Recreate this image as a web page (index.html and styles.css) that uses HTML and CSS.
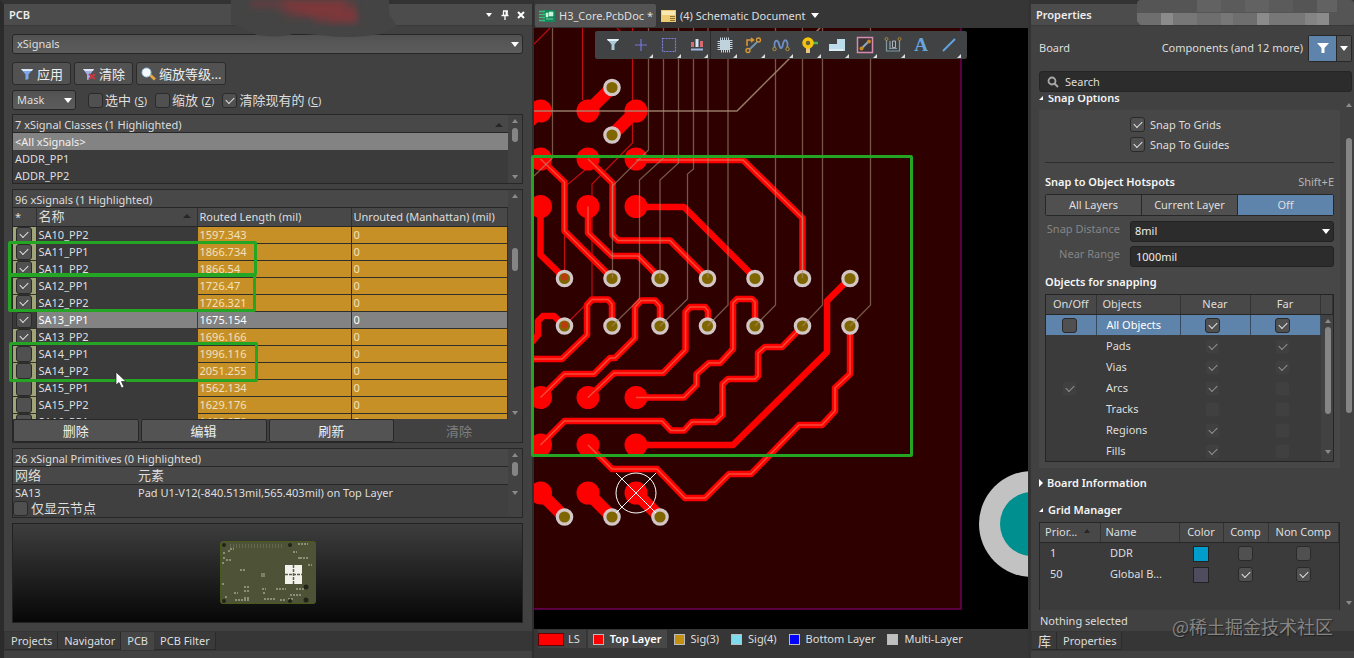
FILE: index.html
```html
<!DOCTYPE html>
<html lang="zh-CN">
<head>
<meta charset="utf-8">
<title>H3_Core.PcbDoc</title>
<link rel="stylesheet" href="styles.css">
</head>
<body>
<div class="app">
  <aside class="panel left">
    <header class="panel-head">
      <h1>PCB</h1>
      <svg class="smudge" width="170" height="37" viewBox="0 0 170 37" aria-hidden="true">
        <path d="M0 0H158V14L166 26L150 34Q120 39 98 36L64 33Q50 39 26 35L10 27L0 24Z" fill="#454444"/>
        <g filter="url(#soft)"><path d="M20 0H124V10H105V24H84V18H58L44 8H20Z" fill="#5e3e3f"/><path d="M48 0H114V9H126V23H100V18H84L60 10Z" fill="#7c373b"/></g>
        <filter id="soft"><feGaussianBlur stdDeviation="3"/></filter>
      </svg>
      <div class="head-icons">
        <button aria-label="Menu"><svg width="10" height="10"><path d="M2 3H8L5 7Z" fill="#fff"/></svg></button>
        <button aria-label="Pin"><svg width="10" height="10"><path d="M3 1H8M3.500 1V5M7 1V5M1.500 5.500H8.500M5 6V10" stroke="#fff" stroke-width="1.300" fill="none"/><path d="M5.500 1H7.500V5H5.500Z" fill="#fff"/></svg></button>
        <button aria-label="Close"><svg width="10" height="10"><path d="M2 2L8 8M8 2L2 8" stroke="#fff" stroke-width="2"/></svg></button>
      </div>
    </header>

    <div class="left-body">
      <div class="select wide"><select aria-label="Mode"><option>xSignals</option></select></div>
      <div class="actions">
        <button class="btn"><svg width="14" height="14"><path d="M1 2H13L8.500 7.500V12L5.500 13V7.500Z" fill="#7ea6ea"/><path d="M1 2H13L12 4H3Z" fill="#dbe6fa"/></svg>应用</button>
        <button class="btn"><svg width="14" height="14"><path d="M1 2H12L8 7.500V12L5 13V7.500Z" fill="#9cb2e6"/><path d="M1 2H12L11 4H3Z" fill="#e2e8fa"/><path d="M7 7L13 12M13 7L7 12" stroke="#cf3640" stroke-width="2"/></svg>清除</button>
        <button class="btn"><svg width="15" height="14"><path d="M8 7L14 12.500" stroke="#e2a743" stroke-width="3"/><circle cx="5.500" cy="5.500" r="4.500" fill="#f4f9ff" stroke="#9fc6e6"/></svg>缩放等级...</button>
      </div>
      <div class="options">
        <div class="select mask"><select aria-label="Mask mode"><option>Mask</option></select></div>
        <label><input type="checkbox"><span>选中 <small>(<u>S</u>)</small></span></label>
        <label><input type="checkbox"><span>缩放 <small>(<u>Z</u>)</small></span></label>
        <label><input type="checkbox" checked><span>清除现有的 <small>(<u>C</u>)</small></span></label>
      </div>

      <section class="box classes">
        <div class="grow">
          <h2>7 xSignal Classes (1 Highlighted)<i class="sort"></i></h2>
          <ul><li class="sel">&lt;All xSignals&gt;</li><li>ADDR_PP1</li><li>ADDR_PP2</li></ul>
        </div>
        <div class="scroll"><i class="up"></i><i class="thumb"></i><i class="down"></i></div>
      </section>

      <section class="box signals">
        <div class="signals-main">
          <div class="grow">
            <h2>96 xSignals (1 Highlighted)</h2>
            <div class="clip">
            <table class="sig-table">
              <colgroup><col class="c1"><col class="c2"><col class="c3"><col></colgroup>
              <thead><tr><th>*</th><th class="cn">名称<i class="sort"></i></th><th>Routed Length (mil)</th><th>Unrouted (Manhattan) (mil)</th></tr></thead>
              <tbody>
                <tr><td><input type="checkbox" aria-label="SA10_PP2" checked></td><td>SA10_PP2</td><td>1597.343</td><td>0</td></tr>
                <tr><td><input type="checkbox" aria-label="SA11_PP1" checked></td><td>SA11_PP1</td><td>1866.734</td><td>0</td></tr>
                <tr><td><input type="checkbox" aria-label="SA11_PP2" checked></td><td>SA11_PP2</td><td>1866.54</td><td>0</td></tr>
                <tr><td><input type="checkbox" aria-label="SA12_PP1" checked></td><td>SA12_PP1</td><td>1726.47</td><td>0</td></tr>
                <tr><td><input type="checkbox" aria-label="SA12_PP2" checked></td><td>SA12_PP2</td><td>1726.321</td><td>0</td></tr>
                <tr class="sel"><td><input type="checkbox" aria-label="SA13_PP1" checked></td><td>SA13_PP1</td><td>1675.154</td><td>0</td></tr>
                <tr><td><input type="checkbox" aria-label="SA13_PP2" checked></td><td>SA13_PP2</td><td>1696.166</td><td>0</td></tr>
                <tr><td><input type="checkbox" aria-label="SA14_PP1"></td><td>SA14_PP1</td><td>1996.116</td><td>0</td></tr>
                <tr><td><input type="checkbox" aria-label="SA14_PP2"></td><td>SA14_PP2</td><td>2051.255</td><td>0</td></tr>
                <tr><td><input type="checkbox" aria-label="SA15_PP1"></td><td>SA15_PP1</td><td>1562.134</td><td>0</td></tr>
                <tr><td><input type="checkbox" aria-label="SA15_PP2"></td><td>SA15_PP2</td><td>1629.176</td><td>0</td></tr>
                <tr><td><input type="checkbox" aria-label="SA16_PP1"></td><td>SA16_PP1</td><td>1468.878</td><td>0</td></tr>
              </tbody>
            </table>
            </div>
          </div>
          <div class="scroll mid"><i class="up"></i><i class="thumb"></i><i class="down"></i></div>
        </div>
        <div class="row-buttons">
          <button>删除</button><button>编辑</button><button>刷新</button><button disabled>清除</button>
        </div>
      </section>

      <section class="box prims">
        <div class="grow">
          <h2>26 xSignal Primitives (0 Highlighted)</h2>
          <table class="prim-table">
            <colgroup><col class="p1"><col></colgroup>
            <thead><tr><th>网络</th><th>元素</th></tr></thead>
            <tbody><tr><td>SA13</td><td>Pad U1-V12(-840.513mil,565.403mil) on Top Layer</td></tr></tbody>
          </table>
          <label class="nodes"><input type="checkbox"><span>仅显示节点</span></label>
        </div>
        <div class="scroll short"><i class="up"></i><i class="thumb"></i><i class="down"></i></div>
      </section>

      <div class="preview">
        <svg width="96" height="64" viewBox="0 0 96 64" role="img" aria-label="Board preview">
          <rect x=".5" y=".5" width="95" height="62" rx="2" fill="#4e5338" stroke="#4a5a1c"/>
          <path d="M10 4H64M10 6H64" stroke="#7c8066" stroke-dasharray="1 2"/>
          <path d="M78 3H84M78 17H82M73 11H77M80 17H88M10 8H14M3 12H6M8 10H10M6 19H12M20 29H25M24 46H29M14 52H18M24 50H29M15 59H30M24 57H29M42 48H46M43 52H46M44 58H56M56 48H66M68 58H74M76 48H84M70 54H82M2 43H5M3 17H5M5 56H8M60 59H66M88 24H92M84 3H88M2 22H5" stroke="#8b8f76" stroke-width="2" stroke-dasharray="2 1"/>
          <rect x="41" y="32" width="4" height="4" fill="#7b8069"/>
          <g fill="#1f2416"><circle cx="4" cy="4" r="2"/><circle cx="70" cy="4" r="2"/><circle cx="4" cy="60" r="2"/><circle cx="70" cy="60" r="2"/><circle cx="86" cy="46" r="2.500"/><circle cx="86" cy="59" r="2.500"/></g>
          <rect x="65" y="24" width="17" height="19" fill="#f2f2ea"/><path d="M65 33.500H82M73.500 24V43" stroke="#5b5f49" stroke-width="1.500" stroke-dasharray="3 1"/>
        </svg>
      </div>
    </div>

    <nav class="tabs"><a href="#">Projects</a><a href="#">Navigator</a><a href="#" class="on">PCB</a><a href="#">PCB Filter</a></nav>
  </aside>

  <main class="center">
    <nav class="doc-tabs">
      <a href="#" class="on"><svg width="16" height="12"><rect x="4" width="12" height="12" rx="1" fill="#12885a"/><path d="M0 1.500H6M0 4.500H6M0 7.500H6M0 10.500H6" stroke="#37c07e" stroke-width="1.300"/><path d="M7 3H9V7H7ZM10 2H14V6H10ZM7 9H14" fill="#c8f3dc" stroke="#c8f3dc" stroke-width=".6"/></svg>H3_Core.PcbDoc *</a>
      <a href="#"><svg width="15" height="12"><path d="M0 0H15V12H0Z" fill="#eccb72"/><path d="M1 1H14V5H1Z" fill="#f8e8b2"/><path d="M9 6.500H14M9 8.500H14M9 10.500H14" stroke="#94732c"/></svg>(4) Schematic Document<i class="caret"></i></a>
    </nav>
    <div class="canvas">
      <svg class="pcb" viewBox="534 28 494 601" preserveAspectRatio="xMinYMin slice" role="img" aria-label="PCB layout">
        <rect x="534" y="28" width="494" height="601" fill="#000"/>
        <path d="M534 28H961V609H534Z" fill="#2e0000"/>
        <path d="M961 28V609H534" fill="none" stroke="#6c0058" stroke-width="1.500"/>
        <circle cx="1032" cy="524" r="53" fill="#c2c2c2"/><circle cx="1032" cy="524" r="32" fill="#008f8f"/>
        <g fill="none" stroke="#c00c10" stroke-width="1.200">
          <path d="M534 44L550 28M582.500 28V100M632.500 28V143L592 184V298L564.500 326M585 170L564.500 187V278M617 28L622 33"/>
        </g>
        <g fill="#f00">
          <circle cx="540.500" cy="111" r="11.500"/><circle cx="588" cy="111" r="11.500"/><circle cx="636" cy="111" r="11.500"/>
          <circle cx="540.500" cy="159" r="11.500"/><circle cx="588" cy="159" r="11.500"/><circle cx="636" cy="159" r="11.500"/>
          <circle cx="540.500" cy="206.500" r="11.500"/><circle cx="588" cy="206.500" r="11.500"/><circle cx="636" cy="206.500" r="11.500"/>
          <circle cx="540.500" cy="397.500" r="11.500"/><circle cx="588" cy="397.500" r="11.500"/><circle cx="636" cy="397.500" r="11.500"/>
          <circle cx="540.500" cy="445" r="11.500"/><circle cx="588" cy="445" r="11.500"/><circle cx="636" cy="445" r="11.500"/>
          <circle cx="540.500" cy="493" r="11.500"/><circle cx="588" cy="493" r="11.500"/><circle cx="636" cy="493" r="11.500"/>
        </g>
        <path d="M588 111L612 87.500M636 111L612 135M540.500 111L530 121M540.500 493L564.500 517M588 493L612 517M636 493L660 517" stroke="#f00" stroke-width="12.500"/>
        <g fill="none" stroke="#f00" stroke-width="6.500" stroke-linejoin="round">
          <path d="M540.500 206.500V255L564.500 278M636 207H684L755 278M636 445H733L827 352V301L850 278M532 342L538 335V321L543 316H554L564.500 326"/>
          <path d="M540.500 159L564.500 182V231L612 278"/><path d="M588 206.500V233L612 256H638L660 278"/><path d="M588 159L612.500 183V235L618 240.500H670L707.500 278"/><path d="M636 160H743L802.500 218V278"/><path d="M534 359H562L587 335V305L592 299.500H608L612 304V326"/><path d="M540.500 397.500L564.500 374H594L610 358H615L635 338V307L641 300.500H655L660 306V326"/><path d="M588 397.500L614 373H663L685.500 350V312L690 307H705L708 311V326"/><path d="M636 397.500H684L696.500 385V374L709 363H720L733 349V303L737 299H752L755 302V326"/><path d="M540.500 445L564.500 421H662L671 430.500H684L692 422H715L722.500 415V384L728 379H755L758 376V353L765 347H782L802.500 326"/><path d="M588 445L612 469H657L685 498H705L729 474H751L799 425H822L835 411V388L850 374V326"/>
        </g>
        <g fill="none" stroke="#f54a34" stroke-width="1.500">
          <path d="M540.500 159L564.500 182V231L612 278"/><path d="M588 206.500V233L612 256H638L660 278"/><path d="M588 159L612.500 183V235L618 240.500H670L707.500 278"/><path d="M636 160H743L802.500 218V278"/><path d="M534 359H562L587 335V305L592 299.500H608L612 304V326"/><path d="M540.500 397.500L564.500 374H594L610 358H615L635 338V307L641 300.500H655L660 306V326"/><path d="M588 397.500L614 373H663L685.500 350V312L690 307H705L708 311V326"/><path d="M636 397.500H684L696.500 385V374L709 363H720L733 349V303L737 299H752L755 302V326"/><path d="M540.500 445L564.500 421H662L671 430.500H684L692 422H715L722.500 415V384L728 379H755L758 376V353L765 347H782L802.500 326"/><path d="M588 445L612 469H657L685 498H705L729 474H751L799 425H822L835 411V388L850 374V326"/>
        </g>
        <g fill="#806600" stroke="#d2c6c6" stroke-width="3.200">
          <circle cx="612" cy="87.500" r="7.200"/><circle cx="612" cy="135" r="7.200"/>
          <circle cx="564.500" cy="278.500" r="7.200"/><circle cx="612" cy="278.500" r="7.200"/><circle cx="660" cy="278.500" r="7.200"/><circle cx="707.500" cy="278.500" r="7.200"/><circle cx="755" cy="278.500" r="7.200"/><circle cx="802.500" cy="278.500" r="7.200"/><circle cx="850" cy="278.500" r="7.200"/>
          <circle cx="564.500" cy="326" r="7.200"/><circle cx="612" cy="326" r="7.200"/><circle cx="660" cy="326" r="7.200"/><circle cx="707.500" cy="326" r="7.200"/><circle cx="755" cy="326" r="7.200"/><circle cx="802.500" cy="326" r="7.200"/><circle cx="850" cy="326" r="7.200"/>
          <circle cx="564.500" cy="517" r="7.200"/><circle cx="612" cy="517" r="7.200"/><circle cx="660" cy="517" r="7.200"/>
        </g>
        <g fill="#b83c10"><circle cx="564.500" cy="277" r="3.500"/><circle cx="564.500" cy="325" r="3.500"/></g>
        <g fill="none" stroke="#a88e78" stroke-opacity=".6" stroke-width="1.300">
          <path d="M552.500 28V158L534 176M648.500 28V150L612.500 186V278M663.500 28V158L639.500 180V299L612 326M678.500 28V163L660 180V278M693.500 28V169L687.500 174V299L660 326M708 28V278M728 28V305L707.500 326M775.500 28V305L755 326M802.500 28V278M822.500 28V305L802.500 326M870.500 28V305L850 326"/>
          <path d="M534 111H737L820 28" stroke-opacity=".85" stroke-width="1.500"/>
        </g>
        <g fill="none" stroke="#fff" stroke-width="1"><circle cx="636" cy="493" r="20"/><path d="M616 473L656 513M656 473L616 513"/></g>
      </svg>
      <div class="toolbar">
        <button aria-label="Filter"><svg width="20" height="20"><path d="M4 4H16L11.500 9.500V15H8.500V9.500Z" fill="#a9c9d8"/><path d="M4 4H16L15 6H5Z" fill="#e7f2f6"/></svg></button>
        <button class="more" aria-label="Move"><svg width="20" height="20"><path d="M10 4V16M4 10H16" stroke="#7377d8" stroke-width="1.200"/></svg></button>
        <button class="more" aria-label="Select"><svg width="20" height="20"><path d="M3.500 3.500H16.500V16.500H3.500Z" fill="none" stroke="#7d80e0" stroke-width="1.200" stroke-dasharray="2 1"/></svg></button>
        <button class="more sep" aria-label="Align"><svg width="20" height="20"><path d="M4 7H7V12H4ZM13 6H16V12H13Z" fill="#d96b70"/><path d="M8.500 4H11.500V12H8.500Z" fill="#d3e4f4"/><path d="M4 14.500H16" stroke="#9eb6e0" stroke-width="2"/></svg></button>
        <button class="more" aria-label="Component"><svg width="20" height="20"><path d="M5 5H15V15H5Z" fill="none" stroke="#c3d2dc" stroke-width="5" stroke-dasharray="1 1"/><path d="M5 5H15V15H5Z" fill="#c0d2dc"/></svg></button>
        <button class="more" aria-label="Route"><svg width="20" height="20"><path d="M4 11V5H10M8 3L10.500 5L8 7" fill="none" stroke="#d99a35" stroke-width="1.500"/><path d="M7 14L14 7" stroke="#7095b0" stroke-width="2"/><g fill="#404244" stroke="#d99a35" stroke-width="1.300"><circle cx="15.500" cy="5" r="2"/><circle cx="5" cy="15.500" r="2"/></g></svg></button>
        <button class="more" aria-label="Tune"><svg width="20" height="20"><path d="M4 14C2 4 7 4 8 9S11 15 12 9S18 4 16 14" fill="none" stroke="#6f8fc6" stroke-width="1.800"/><g fill="#404244" stroke="#b99535"><circle cx="3.500" cy="14" r="1.700"/><circle cx="16.500" cy="14" r="1.700"/></g></svg></button>
        <button class="more" aria-label="Via"><svg width="20" height="20"><path d="M9 10V18" stroke="#ebc77c" stroke-width="4"/><path d="M13 8H19" stroke="#4bb645" stroke-width="2.500"/><circle cx="9" cy="8" r="4" fill="#676142" stroke="#f5c30c" stroke-width="3.500"/></svg></button>
        <button class="more" aria-label="Polygon"><svg width="20" height="20"><path d="M10 4H18V16H2V9H10Z" fill="#bddceb"/><path d="M16 6V16H2V14H16Z" fill="#dcecf2"/></svg></button>
        <button class="more" aria-label="Room"><svg width="20" height="20"><path d="M2.500 2.500H17.500V17.500H2.500Z" fill="#3b3436" stroke="#d68bb4" stroke-width="1.500"/><path d="M7 13L13 7" stroke="#8ca8c4" stroke-width="2"/><g fill="#c68b1f"><circle cx="14" cy="6.500" r="2"/><circle cx="6.500" cy="13.500" r="2"/></g></svg></button>
        <button class="more" aria-label="Dimension"><svg width="20" height="20"><path d="M3.500 5V16H16.500V5M6 13.500H14" fill="none" stroke="#8099a5" stroke-width="1.200"/><g fill="none" stroke="#aa8738"><circle cx="3.500" cy="4" r="1.500"/><circle cx="16.500" cy="4" r="1.500"/></g><path d="M7 6V13M9.500 6H12.500V12.500H9.500Z" fill="none" stroke="#a9b5bb"/></svg></button>
        <button aria-label="Text" class="letter">A</button>
        <button class="more" aria-label="Line"><svg width="20" height="20"><path d="M4 16L16 4" stroke="#63a2df" stroke-width="2"/></svg></button>
      </div>
    </div>
    <div class="layers">
      <button class="ls"><i class="red"></i>LS</button>
      <button class="on"><i class="red"></i>Top Layer</button>
      <button><i class="gold"></i>Sig(3)</button>
      <button><i class="cyan"></i>Sig(4)</button>
      <button><i class="blue"></i>Bottom Layer</button>
      <button><i class="gray"></i>Multi-Layer</button>
    </div>
  </main>

  <aside class="panel right">
    <header class="panel-head">
      <h1>Properties</h1>
      <svg class="mosaic" width="217" height="25" viewBox="0 0 217 25" preserveAspectRatio="none" aria-hidden="true">
        <rect width="217" height="25" rx="4" fill="#555"/><path d="M60 0H84V12H60ZM108 0H132V12H108ZM180 0H200V12H180Z" fill="#626262"/><path d="M84 0H108V12H84ZM132 0H156V12H132Z" fill="#5b5b5b"/><path d="M0 13H24V25H4L0 21ZM60 13H84V25H60ZM96 13H120V25H96Z" fill="#6e6e6e"/><path d="M24 13H36V25H24ZM120 13H132V25H120ZM180 13H192V25H180Z" fill="#8b8b8b"/><path d="M36 13H60V25H36ZM84 13H96V25H84ZM132 13H168V25H132Z" fill="#777"/><path d="M168 13H180V25H168Z" fill="#848484"/>
      </svg>
    </header>
    <div class="board-row">
      <span>Board</span><span class="push">Components (and 12 more)</span>
      <div class="split"><button class="blue" aria-label="Filter"><svg width="12" height="12"><path d="M0 1H12L7.500 6V11H4.500V6Z" fill="#fff"/></svg></button><button aria-label="Filter menu"><i class="caret"></i></button></div>
    </div>
    <label class="search"><svg width="12" height="12"><circle cx="5" cy="5" r="3.500" fill="none" stroke="#a8a8a8" stroke-width="1.800"/><path d="M7.500 7.500L11 11" stroke="#a8a8a8" stroke-width="2"/></svg><input type="text" placeholder="Search" aria-label="Search"></label>

    <div class="props">
      <div class="props-main">
        <div class="cut"><h3 class="open">Snap Options</h3></div>
        <section class="group">
          <div class="snaps">
            <label><input type="checkbox" checked><span>Snap To Grids</span></label>
            <label><input type="checkbox" checked><span>Snap To Guides</span></label>
          </div>
          <div class="hot"><h4>Snap to Object Hotspots</h4><span>Shift+E</span></div>
          <div class="segments"><button>All Layers</button><button>Current Layer</button><button class="blue">Off</button></div>
          <div class="field"><label for="dist">Snap Distance</label><div class="select dark"><select id="dist"><option>8mil</option></select></div></div>
          <div class="field"><label for="near">Near Range</label><input type="text" id="near" value="1000mil"></div>
          <h4 class="obj-title">Objects for snapping</h4>
          <div class="obj-box">
            <table class="obj">
              <colgroup><col class="o1"><col class="o2"><col class="o3"><col class="o3"><col></colgroup>
              <thead><tr><th>On/Off</th><th>Objects</th><th>Near</th><th>Far</th><th></th></tr></thead>
              <tbody>
                <tr class="sel"><td><input type="checkbox" aria-label="All on"></td><td>All Objects</td><td><input type="checkbox" checked aria-label="All near"></td><td><input type="checkbox" checked aria-label="All far"></td><td class="bar" rowspan="7"><div class="scroll obj-scroll"><i class="up"></i><i class="thumb"></i><i class="down"></i></div></td></tr>
                <tr><td></td><td>Pads</td><td><input type="checkbox" checked disabled aria-label="Pads near"></td><td><input type="checkbox" checked disabled aria-label="Pads far"></td></tr>
                <tr><td></td><td>Vias</td><td><input type="checkbox" checked disabled aria-label="Vias near"></td><td><input type="checkbox" checked disabled aria-label="Vias far"></td></tr>
                <tr><td><input type="checkbox" checked disabled aria-label="Arcs on"></td><td>Arcs</td><td><input type="checkbox" checked disabled aria-label="Arcs near"></td><td><input type="checkbox" disabled aria-label="Arcs far"></td></tr>
                <tr><td></td><td>Tracks</td><td><input type="checkbox" disabled aria-label="Tracks near"></td><td><input type="checkbox" disabled aria-label="Tracks far"></td></tr>
                <tr><td></td><td>Regions</td><td><input type="checkbox" checked disabled aria-label="Regions near"></td><td><input type="checkbox" disabled aria-label="Regions far"></td></tr>
                <tr><td></td><td>Fills</td><td><input type="checkbox" checked disabled aria-label="Fills near"></td><td><input type="checkbox" disabled aria-label="Fills far"></td></tr>
              </tbody>
            </table>
          </div>
        </section>
        <h3 class="closed">Board Information</h3>
        <h3 class="open">Grid Manager</h3>
        <div class="grid-box">
          <table class="grids">
            <colgroup><col class="g1"><col class="g2"><col class="g3"><col class="g4"><col></colgroup>
            <thead><tr><th>Prior...<i class="sort"></i></th><th>Name</th><th>Color</th><th>Comp</th><th>Non Comp</th></tr></thead>
            <tbody>
              <tr><td>1</td><td>DDR</td><td><i class="swatch sky"></i></td><td><input type="checkbox" aria-label="DDR comp"></td><td><input type="checkbox" aria-label="DDR non comp"></td></tr>
              <tr><td>50</td><td>Global B...</td><td><i class="swatch slate"></i></td><td><input type="checkbox" checked aria-label="Global comp"></td><td><input type="checkbox" checked aria-label="Global non comp"></td></tr>
            </tbody>
          </table>
        </div>
      </div>
      <div class="scroll page-scroll"><i class="up"></i><i class="thumb"></i><i class="down"></i></div>
    </div>
    <p class="status">Nothing selected</p>
    <nav class="tabs"><a href="#" class="cn">库</a><a href="#">Properties</a></nav>
  </aside>

  <div class="mark m1"></div><div class="mark m2"></div><div class="mark m3"></div><div class="mark m4"></div>
  <svg class="cursor" width="12" height="19" viewBox="0 0 12 19" aria-hidden="true"><path d="M1 1V14L4 11.500L6.500 17L9 16L6.500 10.500H11Z" fill="#fff" stroke="#222" stroke-width=".7"/></svg>
  <div class="watermark">@稀土掘金技术社区</div>
</div>
</body>
</html>
```
FILE: styles.css
```css
* { box-sizing: border-box; }
body { margin: 0; background: #363636; color: #dedede; font: 11px/16px "Noto Sans", "Noto Sans CJK SC", sans-serif; }
h1, h2, h3, h4, p, ul { margin: 0; padding: 0; font-size: 11px; font-weight: 400; list-style: none; }
button, input, select { font: inherit; color: inherit; margin: 0; padding: 0; border: 0; background: none; border-radius: 0; }
a { color: inherit; text-decoration: none; }
table { border-collapse: collapse; border-spacing: 0; table-layout: fixed; width: 100%; }
th, td { padding: 0; font-weight: 400; text-align: left; white-space: nowrap; overflow: hidden; }
small { font-size: 11px; }
svg { flex: none; }

.app { position: relative; display: grid; grid-template-columns: 534px minmax(0, 1fr) 326px; min-height: 100vh; overflow: hidden; }
.panel { display: flex; flex-direction: column; background: #414141; border-top: 4px solid #333; min-width: 0; }
.left { border-left: 4px solid #2b2b2b; border-right: 2px solid #2e2e2e; }
.right { border-left: 3px solid #333; }
.panel-head { position: relative; z-index: 1; display: flex; align-items: center; height: 22px; padding: 0 6px 0 5px; background: #4c4c4c; border-bottom: 1px solid #393939; }
.panel-head h1 { flex: 1; font-size: 11px; font-weight: 600; color: #eee; }
.head-icons { display: flex; gap: 6px; }
.head-icons button { display: flex; }
.smudge { position: absolute; left: 227px; top: -4px; }
.mosaic { position: absolute; left: 106px; right: 0; top: -4px; }

/* shared controls */
input[type="checkbox"] { appearance: none; flex: none; display: inline-block; position: relative; width: 15px; height: 15px; background: #505050; border: 1px solid #2a2a2a; border-radius: 3px; vertical-align: middle; }
input[type="checkbox"]:checked::before { content: ""; position: absolute; left: 3px; top: 3px; width: 7px; height: 4px; border-left: 1px solid #e6e6e6; border-bottom: 1px solid #e6e6e6; transform: rotate(-45deg); }
input[type="checkbox"]:disabled { background: #404040; border-color: #3c3c3c; }
input[type="checkbox"]:disabled::before { opacity: .5; }
.select { position: relative; display: flex; border: 1px solid #272727; border-radius: 3px; background: linear-gradient(#525252, #5c5c5c); }
.select select { appearance: none; width: 100%; height: 18px; padding: 0 4px; outline: 0; }
.select::after, .caret { content: ""; border: 4px solid transparent; border-top: 5px solid #fff; border-bottom: 0; }
.select::after { position: absolute; right: 3px; top: 7px; pointer-events: none; }
.sort { display: inline-block; border: 4px solid transparent; border-bottom: 4px solid #262626; border-top: 0; }
.btn { display: flex; align-items: center; gap: 3px; height: 23px; padding: 0 7px; background: #525252; border: 1px solid #2b2b2b; border-radius: 3px; font-size: 13px; color: #eee; }
.btn:last-child { padding: 0 4px; }
.blue { background: #5f84ab; }
.scroll { display: flex; flex-direction: column; align-items: center; width: 15px; padding: 4px 0; }
.scroll i { width: 6px; }
.up { border: 3px solid transparent; border-bottom: 4px solid #8b8b8b; border-top: 0; }
.down { border: 3px solid transparent; border-top: 4px solid #8b8b8b; border-bottom: 0; margin-top: auto; }
.thumb { height: 14px; margin-top: 5px; background: #858585; border-radius: 3px; }
.grow { flex: 1; min-width: 0; }
.cn { font-size: 13px; }

/* PCB panel */
.left-body { flex: 1; display: flex; flex-direction: column; padding: 8px 9px 8px 8px; }
.wide select { font-size: 11px; }
.actions { display: flex; gap: 3px; margin-top: 8px; }
.options { display: flex; align-items: center; gap: 8px; margin-top: 4px; height: 22px; font-size: 13px; }
.options label, .nodes { display: flex; align-items: center; gap: 2px; }
.mask { width: 64px; font-size: 11px; margin-right: 4px; }
.box { display: flex; border: 1px solid #272727; }
.box h2 { display: flex; align-items: center; justify-content: space-between; height: 18px; padding: 2px 5px 0 2px; background: #484848; border-bottom: 1px solid #272727; }
.classes { height: 70px; margin-top: 3px; background: #3b3b3b; }
.classes li { height: 17px; padding-left: 2px; line-height: 17px; }
.classes .sel { background: #838383; color: #f0f0f0; }
.box .scroll { background: #424242; width: 14px; }
.signals { flex-direction: column; margin-top: 5px; }
.signals-main { display: flex; height: 229px; }
.clip { height: 211px; overflow: hidden; }
.c1 { width: 23px; } .c2 { width: 161px; } .c3 { width: 154px; }
.sig-table th { height: 18px; background: #484848; border-bottom: 1px solid #272727; line-height: 17px; padding-left: 2px; border-right: 1px solid #303030; }
.sig-table .cn .sort { float: right; margin: 6px 6px 0; }
.sig-table td { height: 17px; line-height: 16px; padding-left: 2px; background: #c79027; color: #efe2bd; border-bottom: 1px solid #30302b; border-right: 1px solid #30302b; }
.sig-table td:nth-child(1) { padding: 0; background: #a0a477; text-align: center; }
.sig-table td:nth-child(1) input { display: block; margin: 0 auto; width: 16px; height: 16px; }
.sig-table td:nth-child(2) { background: #3a3a3a; color: #dedede; border-color: #3a3a3a; }
.sig-table .sel td { background: #838383; color: #fff; }
.sig-table .sel td:nth-child(1) { background: #3a3a3a; }
.mid .thumb { height: 23px; margin-top: 50px; }
.row-buttons { display: flex; gap: 2px; height: 23px; }
.row-buttons button { flex: 1; background: #535353; border: 1px solid #272727; border-radius: 2px; font-size: 13px; color: #eee; }
.row-buttons button:disabled { background: none; border-color: transparent; color: #7f7f7f; }
.prims { margin-top: 5px; height: 70px; }
.prims .grow { background: #404040; }
.p1 { width: 123px; }
.prim-table th { height: 17px; line-height: 16px; font-size: 13px; padding-left: 2px; background: #484848; border-bottom: 1px solid #272727; }
.prim-table td { height: 16px; line-height: 16px; padding-left: 2px; }
.nodes { font-size: 13px; line-height: 15px; gap: 3px; }
.short .down { margin-bottom: 18px; }
.preview { flex: 1; display: flex; justify-content: center; align-items: center; min-height: 80px; margin-top: 5px; border: 1px solid #222; background: linear-gradient(#3d3d3d, #070707); }

.tabs { display: flex; height: 27px; padding: 1px 0 8px 1px; background: linear-gradient(#363636 20px, #414141 20px); }
.tabs a { height: 18px; line-height: 18px; padding: 0 5px 0 6px; border: 1px solid #2b2b2b; border-width: 0 1px 1px 0; background: #3a3a3a; }
.tabs .on { background: #454545; border-color: #454545; }

/* editor */
.center { display: flex; flex-direction: column; min-width: 0; background: #363636; }
.doc-tabs { display: flex; height: 28px; padding: 4px 0 0 1px; gap: 1px; }
.doc-tabs a { display: flex; align-items: center; gap: 4px; height: 23px; padding: 0 3px 0 4px; white-space: nowrap; }
.doc-tabs .on { background: #545454; border-radius: 2px; }
.doc-tabs .caret { margin-left: 1px; }
.canvas { position: relative; flex: 1; min-height: 0; background: #000; }
.pcb { position: absolute; width: 100%; height: 100%; display: block; }
.toolbar { position: absolute; left: 61px; top: 3px; display: flex; height: 28px; padding: 0 4px; background: #404243; border-radius: 2px; }
.toolbar button { position: relative; display: flex; align-items: center; justify-content: center; width: 28px; height: 28px; }
.toolbar .more::after { content: ""; position: absolute; right: 2px; bottom: 1px; border: 2px solid #ddd; border-left-color: transparent; border-top-color: transparent; }
.toolbar .sep { border-right: 1px solid #2e2e2e; }
.toolbar .letter { font: 700 19px/20px "Liberation Serif", serif; color: #67a5dc; }
.layers { display: flex; height: 29px; padding: 1px 0 8px 4px; gap: 2px; }
.layers button { display: flex; align-items: center; gap: 6px; padding: 0 5px; height: 18px; white-space: nowrap; }
.layers i { width: 11px; height: 11px; border: 1px solid #bbb; }
.layers .on { background: #474747; font-weight: 600; color: #fff; }
.layers .ls { padding: 0 6px 0 0; background: #414141; gap: 4px; }
.layers .ls i { width: 26px; height: 13px; border-color: #600; }
.red { background: #f00; } .gold { background: #c39012; } .cyan { background: #80dcec; } .layers .blue { background: #00f; } .gray { background: #c0c0c0; }

/* Properties panel */
.board-row { display: flex; align-items: center; gap: 5px; padding: 9px 2px 0 8px; height: 35px; }
.push { margin-left: auto; white-space: nowrap; }
.split { display: flex; height: 27px; border: 1px solid #272727; border-radius: 2px; }
.split button { display: flex; align-items: center; justify-content: center; width: 28px; border-right: 1px solid #272727; }
.split button:last-child { width: 14px; border: 0; background: #505050; }
.search { display: flex; align-items: center; gap: 6px; height: 21px; margin: 10px 2px 0 8px; padding: 0 7px; background: #2c2c2c; border: 1px solid #252525; border-radius: 3px; }
.search input { flex: 1; outline: 0; }
.search input::placeholder { color: #dedede; opacity: 1; }
.props { flex: 1; display: flex; padding-left: 8px; }
.props-main { flex: 1; min-width: 0; display: flex; flex-direction: column; }
.cut { display: flex; align-items: flex-end; height: 18px; overflow: hidden; padding-bottom: 4px; clip-path: inset(3px 0 0 0); }
h3 { display: flex; align-items: center; gap: 3px; font-weight: 600; color: #f4f4f4; }
.open::before { content: ""; border: 2px solid #fff; border-left-color: transparent; border-top-color: transparent; }
.closed::before { content: ""; border: 4px solid transparent; border-left-color: #fff; border-right: 0; }
.open { gap: 5px; }
.closed { gap: 4px; }
.group { background: #474747; padding: 7px 6px 6px; }
.snaps { display: flex; flex-direction: column; gap: 5px; padding: 0 0 10px 85px; border-bottom: 1px solid #2d2d2d; }
.snaps label { display: flex; align-items: center; gap: 5px; height: 15px; }
.hot { display: flex; justify-content: space-between; padding: 11px 0 4px; }
.hot span { color: #b5b5b5; }
h4 { font-weight: 600; color: #f6f6f6; }
.segments { display: flex; border: 1px solid #272727; border-radius: 2px; margin-bottom: 5px; }
.segments button { flex: 1; height: 20px; background: #505050; border-right: 1px solid #272727; }
.segments .blue { background: #5f84ab; border: 0; }
.field { display: grid; grid-template-columns: 75px 1fr; gap: 10px; margin-bottom: 4px; line-height: 16px; }
.field label { text-align: right; color: #858585; white-space: nowrap; }
.field .select, .field > input { height: 21px; min-width: 0; background: #2c2c2c; border: 1px solid #222; border-radius: 3px; color: #eee; }
.field > input { padding: 0 5px; }
.obj-title { margin-top: 7px; }
.obj-box { margin-top: 4px; border: 1px solid #252525; background: #3b3b3b; }
.o1 { width: 50px; } .o2 { width: 84px; } .o3 { width: 70px; }
.obj th, .grids th { height: 19px; line-height: 18px; background: #484848; border-bottom: 1px solid #272727; text-align: center; border-right: 1px solid #333; }
.obj th:nth-child(2) { text-align: left; padding-left: 6px; }
.obj td, .grids td { height: 21px; text-align: center; line-height: 18px; }
.obj td:nth-child(1) { padding-right: 3px; }
.obj td:nth-child(n+3) { padding-right: 6px; }
.obj td:nth-child(2) { text-align: left; padding-left: 10px; }
.obj .sel td { background: #5f84ab; border-right: 1px solid #364a60; color: #fff; }
.obj .sel .bar { background: #424242; border: 0; padding: 0; }
.obj-scroll { width: 14px; height: 145px; padding: 4px 0 6px; }
.obj-scroll .thumb { height: 87px; margin-top: 4px; }
.props-main > .closed { margin-top: 7px; }
.props-main > .open { margin: 11px 0 4px; }
.grid-box { flex: 1; border: 1px solid #272727; border-bottom: 0; background: #3b3b3b; }
.g1 { width: 60px; } .g2 { width: 79px; } .g3 { width: 44px; } .g4 { width: 45px; }
.grids th:nth-child(-n+2) { text-align: left; padding-left: 5px; }
.grids th .sort { margin: 0 0 3px 7px; border-width: 0 3px 4px; }
.grids td:nth-child(-n+2) { text-align: left; padding-left: 10px; }
.swatch { display: inline-block; width: 16px; height: 16px; border: 1px solid #222; vertical-align: middle; }
.sky { background: #009dcc; } .slate { background: #504c60; }
.page-scroll { width: 14px; align-items: flex-end; padding: 11px 2px 5px 0; }
.page-scroll .thumb { height: 275px; margin-top: 31px; }
.status { padding: 3px 9px 2px; }

/* annotations over the workspace */
.mark { position: absolute; z-index: 2; border: 3px solid #24a524; border-radius: 2px; pointer-events: none; }
.m1 { left: 531px; top: 155px; width: 382px; height: 302px; }
.m2 { left: 8px; top: 241px; width: 249px; height: 35px; }
.m3 { left: 8px; top: 274px; width: 248px; height: 38px; }
.m4 { left: 9px; top: 342px; width: 249px; height: 40px; }
.cursor { position: absolute; z-index: 2; left: 115px; top: 371px; }
.watermark { position: absolute; right: 21px; bottom: 19px; font: 18px/26px "Noto Sans CJK SC", sans-serif; color: #858585; text-shadow: 1px 1px 1px #222; }
```
